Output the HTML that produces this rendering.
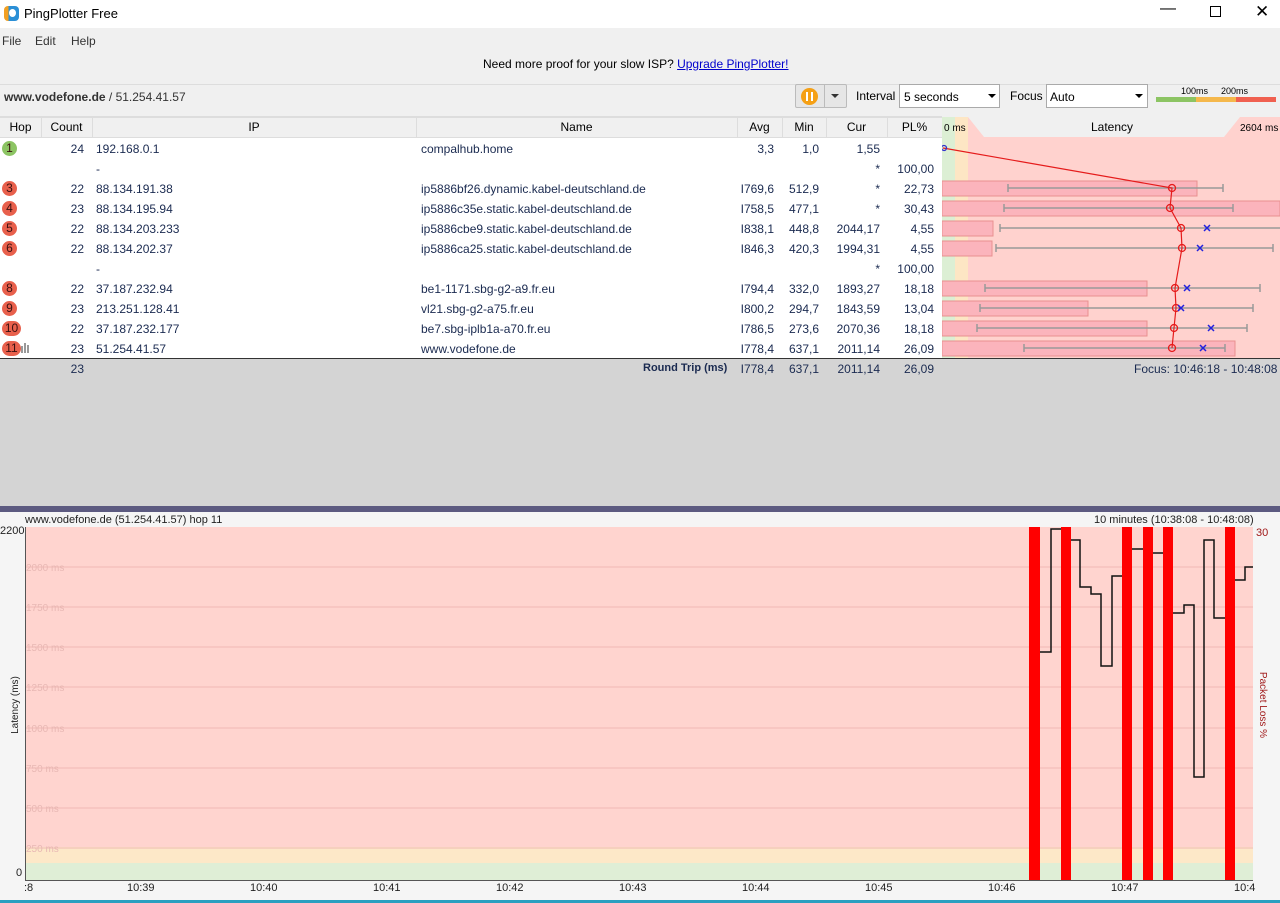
<!DOCTYPE html>
<html><head><meta charset="utf-8"><style>
*{margin:0;padding:0;box-sizing:border-box}
body{width:1280px;height:903px;overflow:hidden;background:#fff;font-family:"Liberation Sans",sans-serif;font-size:12px;color:#1a2a50;position:relative}
.a{position:absolute;white-space:nowrap}
.r{text-align:right}
.c{text-align:center}
.b{position:absolute;width:15px;height:15px;border-radius:50%;background:#e8604c;color:#3a1010;font-size:12px;text-align:center;line-height:15px}
</style></head><body>
<div class="a" style="left:0;top:0;width:1280px;height:28px;background:#fff"></div>
<div class="a" style="left:4px;top:6px;width:15px;height:15px;border-radius:4px;background:linear-gradient(90deg,#f2a023 0 30%,#2a8fd6 30%)"><div style="margin:3px 0 0 5px;width:7px;height:8px;border-radius:50%;background:#fff"></div></div>
<div class="a" style="left:24px;top:6px;font-size:13px;color:#000">PingPlotter Free</div>
<div class="a" style="left:1160px;top:0;font-size:16px;color:#000">&#8212;</div>
<div class="a" style="left:1210px;top:6px;width:11px;height:11px;border:1px solid #000"></div>
<div class="a" style="left:1255px;top:2px;font-size:17px;color:#000">&#x2715;</div>
<div class="a" style="left:0;top:28px;width:1280px;height:80px;background:#f0f0f0"></div>
<div class="a" style="left:2px;top:34px;font-size:12px;color:#333">File</div>
<div class="a" style="left:35px;top:34px;font-size:12px;color:#333">Edit</div>
<div class="a" style="left:71px;top:34px;font-size:12px;color:#333">Help</div>
<div class="a" style="left:483px;top:57px;font-size:12px;color:#000">Need more proof for your slow ISP? <span style="color:#00c;text-decoration:underline">Upgrade PingPlotter!</span></div>
<div class="a" style="left:0;top:84px;width:1280px;height:1px;background:#ddd"></div>
<div class="a" style="left:4px;top:90px;font-size:12px;color:#333"><b>www.vodefone.de</b> / 51.254.41.57</div>
<div class="a" style="left:795px;top:84px;width:52px;height:24px;border:1px solid #bbb;background:#e6e6e6;border-radius:2px"></div>
<div class="a" style="left:801px;top:88px;width:17px;height:17px;border-radius:50%;background:#f5a015"><div style="position:absolute;left:5px;top:4px;width:2px;height:9px;background:#fff"></div><div style="position:absolute;left:10px;top:4px;width:2px;height:9px;background:#fff"></div></div>
<div class="a" style="left:824px;top:84px;width:1px;height:24px;background:#bbb"></div>
<div class="a" style="left:831px;top:94px;border:4px solid transparent;border-top:4px solid #333"></div>
<div class="a" style="left:856px;top:89px;font-size:12px;color:#000">Interval</div>
<div class="a" style="left:899px;top:84px;width:101px;height:24px;border:1px solid #aaa;background:#fff;padding:5px 4px;color:#000">5 seconds</div>
<div class="a" style="left:988px;top:94px;border:4px solid transparent;border-top:4px solid #000"></div>
<div class="a" style="left:1010px;top:89px;font-size:12px;color:#000">Focus</div>
<div class="a" style="left:1046px;top:84px;width:102px;height:24px;border:1px solid #aaa;background:#fff;padding:5px 3px;color:#000">Auto</div>
<div class="a" style="left:1135px;top:94px;border:4px solid transparent;border-top:4px solid #000"></div>
<div class="a" style="left:1181px;top:86px;font-size:9px;color:#000">100ms</div>
<div class="a" style="left:1221px;top:86px;font-size:9px;color:#000">200ms</div>
<div class="a" style="left:1156px;top:97px;width:40px;height:5px;background:#8cc463"></div>
<div class="a" style="left:1196px;top:97px;width:40px;height:5px;background:#f5b84c"></div>
<div class="a" style="left:1236px;top:97px;width:40px;height:5px;background:#f06050"></div>
<div class="a" style="left:0;top:108px;width:1280px;height:9px;background:#f0f0f0"></div>
<div class="a" style="left:0;top:116px;width:942px;height:22px;background:#f0f0f0;border-top:2px solid #ddd;border-bottom:1px solid #ddd"></div>
<div class="a c" style="left:0;top:120px;width:41px;color:#000">Hop</div>
<div class="a c" style="left:41px;top:120px;width:51px;color:#000">Count</div>
<div class="a c" style="left:92px;top:120px;width:324px;color:#000">IP</div>
<div class="a c" style="left:416px;top:120px;width:321px;color:#000">Name</div>
<div class="a c" style="left:737px;top:120px;width:45px;color:#000">Avg</div>
<div class="a c" style="left:782px;top:120px;width:44px;color:#000">Min</div>
<div class="a c" style="left:826px;top:120px;width:61px;color:#000">Cur</div>
<div class="a c" style="left:887px;top:120px;width:55px;color:#000">PL%</div>
<div class="a" style="left:41px;top:118px;width:1px;height:19px;background:#ddd"></div>
<div class="a" style="left:92px;top:118px;width:1px;height:19px;background:#ddd"></div>
<div class="a" style="left:416px;top:118px;width:1px;height:19px;background:#ddd"></div>
<div class="a" style="left:737px;top:118px;width:1px;height:19px;background:#ddd"></div>
<div class="a" style="left:782px;top:118px;width:1px;height:19px;background:#ddd"></div>
<div class="a" style="left:826px;top:118px;width:1px;height:19px;background:#ddd"></div>
<div class="a" style="left:887px;top:118px;width:1px;height:19px;background:#ddd"></div>
<svg class="a" style="left:942px;top:117px" width="338" height="241">
<rect x="0" y="0" width="13" height="241" fill="#dcefd4"/>
<rect x="13" y="0" width="13" height="241" fill="#fde6c4"/>
<rect x="26" y="0" width="312" height="241" fill="#ffd2ce"/>
<polygon points="26,0 298,0 282,20 42,20" fill="#f0f0f0"/>
<g fill="#fbb4bc" stroke="#e89090" stroke-width="1">
<rect x="0" y="64" width="255" height="15"/><rect x="0" y="84" width="338" height="15"/>
<rect x="0" y="104" width="51" height="15"/><rect x="0" y="124" width="50" height="15"/>
<rect x="0" y="164" width="205" height="15"/><rect x="0" y="184" width="146" height="15"/>
<rect x="0" y="204" width="205" height="15"/><rect x="0" y="224" width="293" height="15"/></g>
<g stroke="#999" stroke-width="1.5">
<path d="M66 71H281M66 67v8M281 67v8"/><path d="M62 91H291M62 87v8M291 87v8"/>
<path d="M58 111H338M58 107v8"/><path d="M54 131H331M54 127v8M331 127v8"/>
<path d="M43 171H318M43 167v8M318 167v8"/><path d="M38 191H311M38 187v8M311 187v8"/>
<path d="M35 211H305M35 207v8M305 207v8"/><path d="M82 231H283M82 227v8M283 227v8"/></g>
<polyline fill="none" stroke="#e51b1b" stroke-width="1.2" points="1,31 230,71 228,91 239,111 240,131 233,171 234,191 232,211 230,231"/>
<g fill="none" stroke="#e51b1b" stroke-width="1.3"><circle cx="230" cy="71" r="3.5"/><circle cx="228" cy="91" r="3.5"/><circle cx="239" cy="111" r="3.5"/><circle cx="240" cy="131" r="3.5"/><circle cx="233" cy="171" r="3.5"/><circle cx="234" cy="191" r="3.5"/><circle cx="232" cy="211" r="3.5"/><circle cx="230" cy="231" r="3.5"/></g>
<circle cx="2" cy="31" r="2.5" fill="none" stroke="#33c" stroke-width="1.3"/>
<g stroke="#2222dd" stroke-width="1.5"><path d="M262 108l6 6M268 108l-6 6M255 128l6 6M261 128l-6 6M242 168l6 6M248 168l-6 6M236 188l6 6M242 188l-6 6M266 208l6 6M272 208l-6 6M258 228l6 6M264 228l-6 6"/></g>
</svg>
<div class="a" style="left:944px;top:123px;font-size:10px;color:#000">0 ms</div>
<div class="a c" style="left:1060px;top:120px;width:104px;color:#000">Latency</div>
<div class="a" style="left:1240px;top:123px;font-size:10px;color:#000">2604 ms</div>
<div class="b" style="left:2px;top:141px;background:#8cc463">1</div>
<div class="a r" style="left:41px;top:142px;width:43px">24</div><div class="a" style="left:96px;top:142px">192.168.0.1</div><div class="a" style="left:421px;top:142px">compalhub.home</div>
<div class="a r" style="left:737px;top:142px;width:37px">3,3</div><div class="a r" style="left:782px;top:142px;width:37px">1,0</div><div class="a r" style="left:826px;top:142px;width:54px">1,55</div>
<div class="a" style="left:96px;top:162px">-</div><div class="a r" style="left:826px;top:162px;width:54px">*</div><div class="a r" style="left:887px;top:162px;width:47px">100,00</div>

<div class="b" style="left:2px;top:181px">3</div>
<div class="a r" style="left:41px;top:182px;width:43px">22</div><div class="a" style="left:96px;top:182px">88.134.191.38</div><div class="a" style="left:421px;top:182px">ip5886bf26.dynamic.kabel-deutschland.de</div>
<div class="a r" style="left:737px;top:182px;width:37px">I769,6</div><div class="a r" style="left:782px;top:182px;width:37px">512,9</div><div class="a r" style="left:826px;top:182px;width:54px">*</div><div class="a r" style="left:887px;top:182px;width:47px">22,73</div>

<div class="b" style="left:2px;top:201px">4</div>
<div class="a r" style="left:41px;top:202px;width:43px">23</div><div class="a" style="left:96px;top:202px">88.134.195.94</div><div class="a" style="left:421px;top:202px">ip5886c35e.static.kabel-deutschland.de</div>
<div class="a r" style="left:737px;top:202px;width:37px">I758,5</div><div class="a r" style="left:782px;top:202px;width:37px">477,1</div><div class="a r" style="left:826px;top:202px;width:54px">*</div><div class="a r" style="left:887px;top:202px;width:47px">30,43</div>

<div class="b" style="left:2px;top:221px">5</div>
<div class="a r" style="left:41px;top:222px;width:43px">22</div><div class="a" style="left:96px;top:222px">88.134.203.233</div><div class="a" style="left:421px;top:222px">ip5886cbe9.static.kabel-deutschland.de</div>
<div class="a r" style="left:737px;top:222px;width:37px">I838,1</div><div class="a r" style="left:782px;top:222px;width:37px">448,8</div><div class="a r" style="left:826px;top:222px;width:54px">2044,17</div><div class="a r" style="left:887px;top:222px;width:47px">4,55</div>

<div class="b" style="left:2px;top:241px">6</div>
<div class="a r" style="left:41px;top:242px;width:43px">22</div><div class="a" style="left:96px;top:242px">88.134.202.37</div><div class="a" style="left:421px;top:242px">ip5886ca25.static.kabel-deutschland.de</div>
<div class="a r" style="left:737px;top:242px;width:37px">I846,3</div><div class="a r" style="left:782px;top:242px;width:37px">420,3</div><div class="a r" style="left:826px;top:242px;width:54px">1994,31</div><div class="a r" style="left:887px;top:242px;width:47px">4,55</div>

<div class="a" style="left:96px;top:262px">-</div><div class="a r" style="left:826px;top:262px;width:54px">*</div><div class="a r" style="left:887px;top:262px;width:47px">100,00</div>

<div class="b" style="left:2px;top:281px">8</div>
<div class="a r" style="left:41px;top:282px;width:43px">22</div><div class="a" style="left:96px;top:282px">37.187.232.94</div><div class="a" style="left:421px;top:282px">be1-1171.sbg-g2-a9.fr.eu</div>
<div class="a r" style="left:737px;top:282px;width:37px">I794,4</div><div class="a r" style="left:782px;top:282px;width:37px">332,0</div><div class="a r" style="left:826px;top:282px;width:54px">1893,27</div><div class="a r" style="left:887px;top:282px;width:47px">18,18</div>

<div class="b" style="left:2px;top:301px">9</div>
<div class="a r" style="left:41px;top:302px;width:43px">23</div><div class="a" style="left:96px;top:302px">213.251.128.41</div><div class="a" style="left:421px;top:302px">vl21.sbg-g2-a75.fr.eu</div>
<div class="a r" style="left:737px;top:302px;width:37px">I800,2</div><div class="a r" style="left:782px;top:302px;width:37px">294,7</div><div class="a r" style="left:826px;top:302px;width:54px">1843,59</div><div class="a r" style="left:887px;top:302px;width:47px">13,04</div>

<div class="b" style="left:2px;top:321px;width:19px;border-radius:8px">10</div>
<div class="a r" style="left:41px;top:322px;width:43px">22</div><div class="a" style="left:96px;top:322px">37.187.232.177</div><div class="a" style="left:421px;top:322px">be7.sbg-iplb1a-a70.fr.eu</div>
<div class="a r" style="left:737px;top:322px;width:37px">I786,5</div><div class="a r" style="left:782px;top:322px;width:37px">273,6</div><div class="a r" style="left:826px;top:322px;width:54px">2070,36</div><div class="a r" style="left:887px;top:322px;width:47px">18,18</div>

<div class="b" style="left:2px;top:341px;width:19px;border-radius:8px">11</div>
<div class="a" style="left:21px;top:346px;width:2px;height:7px;background:#999"></div><div class="a" style="left:24px;top:343px;width:2px;height:10px;background:#999"></div><div class="a" style="left:27px;top:345px;width:2px;height:8px;background:#999"></div>
<div class="a r" style="left:41px;top:342px;width:43px">23</div><div class="a" style="left:96px;top:342px">51.254.41.57</div><div class="a" style="left:421px;top:342px">www.vodefone.de</div>
<div class="a r" style="left:737px;top:342px;width:37px">I778,4</div><div class="a r" style="left:782px;top:342px;width:37px">637,1</div><div class="a r" style="left:826px;top:342px;width:54px">2011,14</div><div class="a r" style="left:887px;top:342px;width:47px">26,09</div>

<div class="a" style="left:0;top:358px;width:1280px;height:148px;background:#d4d4d4;border-top:1px solid #333"></div>
<div class="a r" style="left:41px;top:362px;width:43px">23</div>
<div class="a" style="left:643px;top:362px;font-weight:bold;font-size:11px">Round Trip (ms)</div>
<div class="a r" style="left:737px;top:362px;width:37px">I778,4</div><div class="a r" style="left:782px;top:362px;width:37px">637,1</div><div class="a r" style="left:826px;top:362px;width:54px">2011,14</div><div class="a r" style="left:887px;top:362px;width:47px">26,09</div>
<div class="a" style="left:1134px;top:362px">Focus: 10:46:18 - 10:48:08</div>
<div class="a" style="left:0;top:506px;width:1280px;height:6px;background:#5c5a80"></div>
<div class="a" style="left:0;top:512px;width:1280px;height:388px;background:#f5f5f5"></div>
<div class="a" style="left:25px;top:514px;font-size:11px;color:#222">www.vodefone.de (51.254.41.57) hop 11</div>
<div class="a" style="left:1094px;top:514px;font-size:11px;color:#222">10 minutes (10:38:08 - 10:48:08)</div>
<div class="a" style="left:0;top:525px;font-size:11px;color:#222">2200</div>
<div class="a" style="left:16px;top:867px;font-size:11px;color:#222">0</div>
<div class="a" style="left:1256px;top:527px;font-size:11px;color:#a01818">30</div>
<div class="a c" style="left:-23px;top:698px;width:80px;height:14px;font-size:10px;color:#222;transform:rotate(-90deg)">Latency (ms)</div>
<div class="a c" style="left:1221px;top:698px;width:80px;height:14px;font-size:10px;color:#a01818;transform:rotate(90deg)">Packet Loss %</div>
<svg class="a" style="left:25px;top:527px" width="1228" height="354">
<rect x="0" y="0" width="1228" height="320" fill="#ffd4cf"/>
<rect x="0" y="320" width="1228" height="16" fill="#fde8c8"/>
<rect x="0" y="336" width="1228" height="18" fill="#dfeed6"/>
<g stroke="#f0b8b4" stroke-width="1"><path d="M0 40H1228M0 80H1228M0 120H1228M0 160H1228M0 201H1228M0 241H1228M0 281H1228M0 321H1228"/></g>
<g font-family="Liberation Sans" font-size="10" fill="#e8b8b4"><text x="1" y="44">2000 ms</text><text x="1" y="84">1750 ms</text><text x="1" y="124">1500 ms</text><text x="1" y="164">1250 ms</text><text x="1" y="205">1000 ms</text><text x="1" y="245">750 ms</text><text x="1" y="285">500 ms</text><text x="1" y="325">250 ms</text></g>
<g fill="#ff0000"><rect x="1004" y="0" width="11" height="354"/><rect x="1036" y="0" width="10" height="354"/><rect x="1097" y="0" width="10" height="354"/><rect x="1118" y="0" width="10" height="354"/><rect x="1138" y="0" width="10" height="354"/><rect x="1200" y="0" width="10" height="354"/></g>
<polyline fill="none" stroke="#111" stroke-width="1.5" points="1015,125 1026,125 1026,2 1036,2"/>
<polyline fill="none" stroke="#111" stroke-width="1.5" points="1046,13 1055,13 1055,60 1066,60 1066,67 1076,67 1076,139 1087,139 1087,49 1097,49"/>
<polyline fill="none" stroke="#111" stroke-width="1.5" points="1107,22 1118,22"/>
<polyline fill="none" stroke="#111" stroke-width="1.5" points="1128,26 1138,26"/>
<polyline fill="none" stroke="#111" stroke-width="1.5" points="1148,86 1159,86 1159,78 1169,78 1169,250 1179,250 1179,13 1189,13 1189,91 1200,91"/>
<polyline fill="none" stroke="#111" stroke-width="1.5" points="1210,53 1220,53 1220,40 1228,40"/>
<path d="M0.5 0V353.5H1228" stroke="#555" fill="none"/>
</svg>
<div class="a" style="left:24px;top:882px;font-size:11px;color:#222">:8</div>
<div class="a" style="left:127px;top:882px;font-size:11px;color:#222">10:39</div>
<div class="a" style="left:250px;top:882px;font-size:11px;color:#222">10:40</div>
<div class="a" style="left:373px;top:882px;font-size:11px;color:#222">10:41</div>
<div class="a" style="left:496px;top:882px;font-size:11px;color:#222">10:42</div>
<div class="a" style="left:619px;top:882px;font-size:11px;color:#222">10:43</div>
<div class="a" style="left:742px;top:882px;font-size:11px;color:#222">10:44</div>
<div class="a" style="left:865px;top:882px;font-size:11px;color:#222">10:45</div>
<div class="a" style="left:988px;top:882px;font-size:11px;color:#222">10:46</div>
<div class="a" style="left:1111px;top:882px;font-size:11px;color:#222">10:47</div>
<div class="a" style="left:1234px;top:882px;font-size:11px;color:#222">10:4</div>
<div class="a" style="left:0;top:900px;width:1280px;height:3px;background:#2a9fc0"></div>
</body></html>
